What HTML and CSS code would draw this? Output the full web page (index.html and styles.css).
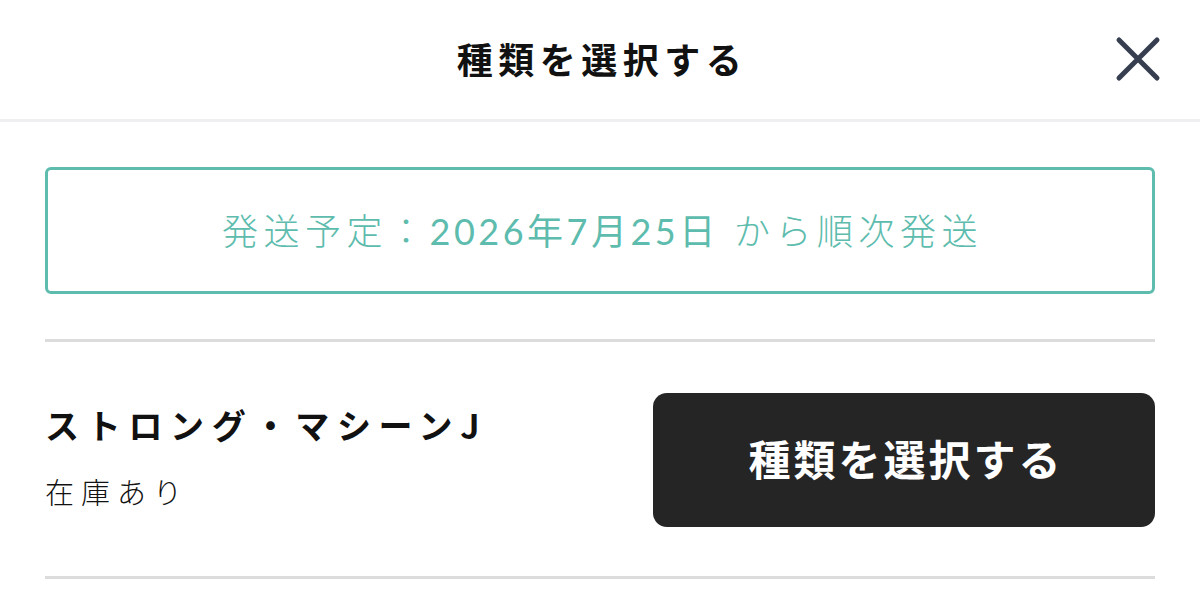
FILE: index.html
```html
<!DOCTYPE html>
<html lang="ja">
<head>
<meta charset="utf-8">
<title>種類を選択する</title>
<link rel="stylesheet" href="styles.css">
</head>
<body>
<div class="sheet">
  <header class="sheet-header">
    <h1 class="sheet-title">種類を選択する</h1>
    <button class="close-btn" aria-label="閉じる">
      <svg width="46" height="46" viewBox="0 0 46 46">
        <path d="M4 4 L42 42 M42 4 L4 42" stroke="#363e50" stroke-width="5" stroke-linecap="round" fill="none"/>
      </svg>
    </button>
  </header>
  <main class="sheet-body">
    <div class="ship-notice">発送予定：<span class="ship-date">2026年7月25日</span> から順次発送</div>
    <div class="variant-row">
      <div class="variant-info">
        <div class="variant-name">ストロング・マシーンJ</div>
        <div class="variant-stock">在庫あり</div>
      </div>
      <button class="select-btn">種類を選択する</button>
    </div>
  </main>
</div>
</body>
</html>
```

FILE: styles.css
```css
* { box-sizing: border-box; }

html, body {
  margin: 0;
  padding: 0;
  background: #ffffff;
  font-family: "Noto Sans CJK JP", "Noto Sans", sans-serif;
  color: #111111;
}

.sheet {
  width: 1200px;
}

.sheet-header {
  position: relative;
  height: 122px;
  border-bottom: 3px solid #efeff2;
  display: flex;
  align-items: center;
  justify-content: center;
}

.sheet-title {
  margin: 0;
  font-size: 36px;
  font-weight: 700;
  letter-spacing: 5.5px;
  line-height: 1;
  padding-bottom: 4px;
  padding-left: 4px;
}

.close-btn {
  position: absolute;
  right: 39px;
  top: 36px;
  padding: 0;
  border: 0;
  background: none;
  width: 46px;
  height: 46px;
}

.close-btn svg { display: block; }

.sheet-body {
  padding: 45px 45px 0;
}

.ship-notice {
  height: 127px;
  border: 3px solid #5dbcad;
  border-radius: 6px;
  display: flex;
  align-items: center;
  justify-content: center;
  white-space: pre;
  color: #5dbcad;
  font-family: "Lato", "Noto Sans CJK JP", sans-serif;
  font-size: 36px;
  font-weight: 300;
  letter-spacing: 5.5px;
  padding: 0 0 4px 5px;
}

.ship-date {
  font-weight: 400;
  letter-spacing: 3.5px;
}

.variant-row {
  margin-top: 45px;
  border-top: 3px solid #dcdcdc;
  border-bottom: 3px solid #dcdcdc;
  display: flex;
  align-items: center;
  justify-content: space-between;
  height: 240px;
}

.variant-info {
  display: flex;
  flex-direction: column;
  gap: 28px;
  padding-bottom: 4px;
}

.variant-name {
  font-size: 34px;
  font-weight: 700;
  letter-spacing: 7.7px;
  line-height: 1.2;
}

.variant-stock {
  font-size: 29px;
  font-weight: 300;
  letter-spacing: 7px;
  line-height: 1.2;
  color: #111111;
}

.select-btn {
  width: 502px;
  height: 134px;
  border: 0;
  border-radius: 14px;
  background: #252525;
  color: #ffffff;
  font-family: inherit;
  font-size: 42px;
  font-weight: 700;
  letter-spacing: 3px;
  margin-top: 2px;
  padding: 0 0 6px 4px;
}
```
